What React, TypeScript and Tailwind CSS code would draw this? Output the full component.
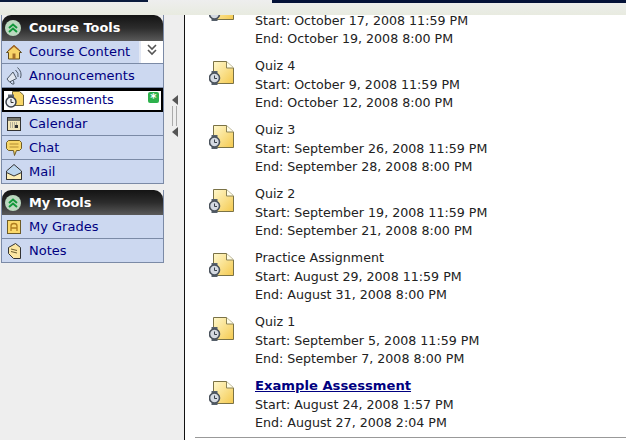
const FONT = "font-['DejaVu_Sans',Verdana,sans-serif]";

function QuizIcon() {
  return (
    <svg width="26" height="27" viewBox="0 0 26 27" className="shrink-0">
      <defs>
        <linearGradient id="pg" x1="0" y1="0" x2="1" y2="1">
          <stop offset="0" stopColor="#fff8cc" />
          <stop offset="1" stopColor="#f4c94e" />
        </linearGradient>
      </defs>
      <path d="M4.500 1.500H17.500L24.500 8V23.500H4.500Z" fill="url(#pg)" stroke="#7a7246" />
      <path d="M17.500 1.500V8H24.500" fill="#fffde8" stroke="#8a8256" />
      <rect x="2.500" y="11" width="6" height="3" fill="#56606a" />
      <rect x="2.500" y="22" width="6" height="3" fill="#56606a" />
      <circle cx="5.500" cy="18" r="5" fill="#d5dae2" stroke="#4a525c" strokeWidth="1.600" />
      <path d="M5.500 15.500V18.500H8" fill="none" stroke="#39414a" />
    </svg>
  );
}

function Chevrons() {
  return (
    <svg width="12" height="12" viewBox="0 0 12 12" fill="none" stroke="currentColor" strokeWidth="2">
      <path d="M2 6L6 2.500L10 6M2 10L6 6.500L10 10" />
    </svg>
  );
}

function Header({ title, tall }: { title: string; tall?: boolean }) {
  return (
    <div className={`${tall ? "h-[26px]" : "h-[25px]"} flex items-center rounded-t-[9px] bg-gradient-to-b from-[#141414] via-[#2c2c2c] to-[#5a5a5a] pl-[3px]`}>
      <span className="w-[16px] h-[16px] rounded-full bg-[#bcd9c0] flex items-center justify-center text-[#12983a]">
        <Chevrons />
      </span>
      <span className="ml-[8px] text-white font-bold text-[12.85px]">{title}</span>
    </div>
  );
}

const icons: Record<string, JSX.Element> = {
  home: (
    <svg width="18" height="18" viewBox="0 0 18 18">
      <path d="M1.500 9.500L9 2.500L16.500 9.500H14.500V16H3.500V9.500Z" fill="#f8d468" stroke="#5e4a1c" />
      <path d="M4 7L9 3L14 7" fill="none" stroke="#a5692a" strokeWidth="1.500" />
      <rect x="7.500" y="10.500" width="3" height="5.500" fill="#a5702a" />
    </svg>
  ),
  announce: (
    <svg width="18" height="19" viewBox="0 0 18 19" fill="none" stroke="#4f5a68">
      <path d="M2 13L8 6L11.500 12.500L4.500 16Z" fill="#e2e7f0" />
      <path d="M5 16L7 18H9L8.500 14.500" />
      <path d="M10.500 4Q14 7 13 11M12.500 1.500Q17.500 6 15.500 12" />
    </svg>
  ),
  assess: (
    <svg width="20" height="18" viewBox="0 0 20 18">
      <path d="M7.500 0.500H14.500L18.500 4V14.500H7.500Z" fill="#f8d668" stroke="#6f6438" />
      <rect x="3" y="3.500" width="6" height="2.500" fill="#59626c" />
      <circle cx="6" cy="11" r="5" fill="#eceff3" stroke="#3a414b" strokeWidth="1.500" />
      <path d="M6 8V11.500H8.500" fill="none" stroke="#333" />
    </svg>
  ),
  calendar: (
    <svg width="18" height="18" viewBox="0 0 18 18">
      <rect x="2.500" y="2.500" width="13" height="13" fill="#f2e6bb" stroke="#333" />
      <rect x="3" y="3" width="12" height="3" fill="#77776e" />
      <path d="M5 8h8M5 10h8M5 12h8" stroke="#777" strokeDasharray="1 1" />
      <rect x="10" y="10" width="3" height="3" fill="#333" />
    </svg>
  ),
  chat: (
    <svg width="18" height="18" viewBox="0 0 18 18">
      <path d="M3.500 1.500H14.500L16.500 3.500V9.500L14.500 11.500H11.500L9.500 16.500L8.500 11.500H3.500L1.500 9.500V3.500Z" fill="#f8d768" stroke="#6e5c28" />
      <path d="M4.500 5H13.500M4.500 8H13.500" stroke="#b08a32" />
    </svg>
  ),
  mail: (
    <svg width="18" height="18" viewBox="0 0 18 18">
      <path d="M1.500 8L9 1.500L16.500 8V16.500H1.500Z" fill="#bcd6ee" stroke="#333" />
      <path d="M1.500 16.500V9.500L9 13L16.500 9.500V16.500Z" fill="#fbedb6" stroke="#333" />
    </svg>
  ),
  grades: (
    <svg width="18" height="18" viewBox="0 0 18 18">
      <rect x="2.500" y="2.500" width="13" height="13" fill="#fbd96b" stroke="#6e5c28" />
      <path d="M6 13V8Q6 5.500 9 5.500T12 8V13M6 10H12" fill="none" stroke="#b07d20" strokeWidth="1.300" />
    </svg>
  ),
  notes: (
    <svg width="18" height="18" viewBox="0 0 18 18">
      <path d="M3.500 5.500L10.500 1.500L15.500 5.500V16.500H8.500L3.500 11.500Z" fill="#fbe6a2" stroke="#333" />
      <path d="M6 7L12 8.500M6 9.500L12 11" stroke="#6b5d2f" />
    </svg>
  ),
};

function NavRow({ icon, label }: { icon: string; label: string }) {
  return (
    <div className="h-[24px] flex items-center border-b border-[#7b8aa6] bg-[#ccd8f0]">
      <span className="w-[24px] pl-[3px] flex justify-start">{icons[icon]}</span>
      <span className="ml-[3px] text-[13px] text-[#000080]">{label}</span>
    </div>
  );
}

function Sidebar() {
  return (
    <aside className="w-[184px] shrink-0 flex">
      <div className="w-[163px] ml-[1px] flex flex-col gap-[6px]">
        <div className="border-x border-[#7b8aa6]">
          <Header title="Course Tools" tall />
          <div className="h-[23px] flex bg-white border-b border-[#7b8aa6]">
            <div className="w-[139px] flex items-center bg-[#ccd8f0] border-r-2 border-[#e4e9f4]">
              <span className="w-[24px] pl-[3px]">{icons.home}</span>
              <span className="ml-[3px] text-[13px] text-[#000080]">Course Content</span>
            </div>
            <div className="flex-1 flex justify-center pt-[2px] text-[#555]">
              <svg width="12" height="14" viewBox="0 0 12 14" fill="none" stroke="currentColor" strokeWidth="1.600">
                <path d="M2 2L6 6L10 2M2 7L6 11L10 7" />
              </svg>
            </div>
          </div>
          <NavRow icon="announce" label="Announcements" />
          <div className="h-[24px] relative flex items-center bg-white border-2 border-t-[3px] border-black pb-[1px]">
            <span className="w-[22px] pl-[1px]">{icons.assess}</span>
            <span className="ml-[3px] text-[13px] text-[#000080]">Assessments</span>
            <span className="absolute right-[2px] top-[1px] w-[11px] h-[11px] rounded-[2px] bg-[#2db14c] text-white text-[12px] leading-[13px] text-center font-bold">*</span>
          </div>
          <NavRow icon="calendar" label="Calendar" />
          <NavRow icon="chat" label="Chat" />
          <NavRow icon="mail" label="Mail" />
        </div>
        <div className="border-x border-[#7b8aa6]">
          <Header title="My Tools" />
          <NavRow icon="grades" label="My Grades" />
          <NavRow icon="notes" label="Notes" />
        </div>
      </div>
      <div className="w-[20px] flex flex-col items-center pt-[80px] pl-[1px]">
        <span className="w-0 h-0 border-y-[5px] border-y-transparent border-r-[6px] border-r-[#555]" />
        <span className="w-[5px] h-[20px] my-[1px] border-x border-[#aaa]" />
        <span className="w-0 h-0 border-y-[5px] border-y-transparent border-r-[6px] border-r-[#555]" />
      </div>
    </aside>
  );
}

const items: [string, string, string][] = [
  ["", "Start: October 17, 2008 11:59 PM", "End: October 19, 2008 8:00 PM"],
  ["Quiz 4", "Start: October 9, 2008 11:59 PM", "End: October 12, 2008 8:00 PM"],
  ["Quiz 3", "Start: September 26, 2008 11:59 PM", "End: September 28, 2008 8:00 PM"],
  ["Quiz 2", "Start: September 19, 2008 11:59 PM", "End: September 21, 2008 8:00 PM"],
  ["Practice Assignment", "Start: August 29, 2008 11:59 PM", "End: August 31, 2008 8:00 PM"],
  ["Quiz 1", "Start: September 5, 2008 11:59 PM", "End: September 7, 2008 8:00 PM"],
];

function Item({ title, start, end, link }: { title: string; start: string; end: string; link?: boolean }) {
  return (
    <div className="h-[64px] shrink-0 flex pl-[24px] pt-[4px]">
      <span className="w-[46px] pt-[3px]"><QuizIcon /></span>
      <div className="text-[12.65px] leading-[18px] text-[#222]">
        <div className={link ? "h-[19px] font-bold text-[13.15px] text-[#000080] underline" : "h-[19px]"}>{title}</div>
        <div>{start}</div>
        <div>{end}</div>
      </div>
    </div>
  );
}

export default function App() {
  return (
    <div className={`${FONT} w-[626px] h-[440px] overflow-hidden flex flex-col bg-[#eeeeee]`}>
      <div className="h-[15px] shrink-0 flex bg-gradient-to-b from-[#eeeeee] to-[#e8ebe0]">
        <div className="w-[148px] h-[2px] bg-[#0a1a3c]" />
        <div className="ml-[124px] flex-1 h-[3px] bg-[#041238]" />
      </div>
      <div className="flex-1 flex min-h-0">
        <Sidebar />
        <main className="flex-1 bg-white border-l border-[#111] flex flex-col justify-end overflow-hidden pb-[2px]">
          {items.map((i) => (
            <Item key={i[1]} title={i[0]} start={i[1]} end={i[2]} />
          ))}
          <Item title="Example Assessment" start="Start: August 24, 2008 1:57 PM" end="End: August 27, 2008 2:04 PM" link />
          <div className="ml-[10px] h-[1px] shrink-0 bg-[#999]" />
        </main>
      </div>
    </div>
  );
}
